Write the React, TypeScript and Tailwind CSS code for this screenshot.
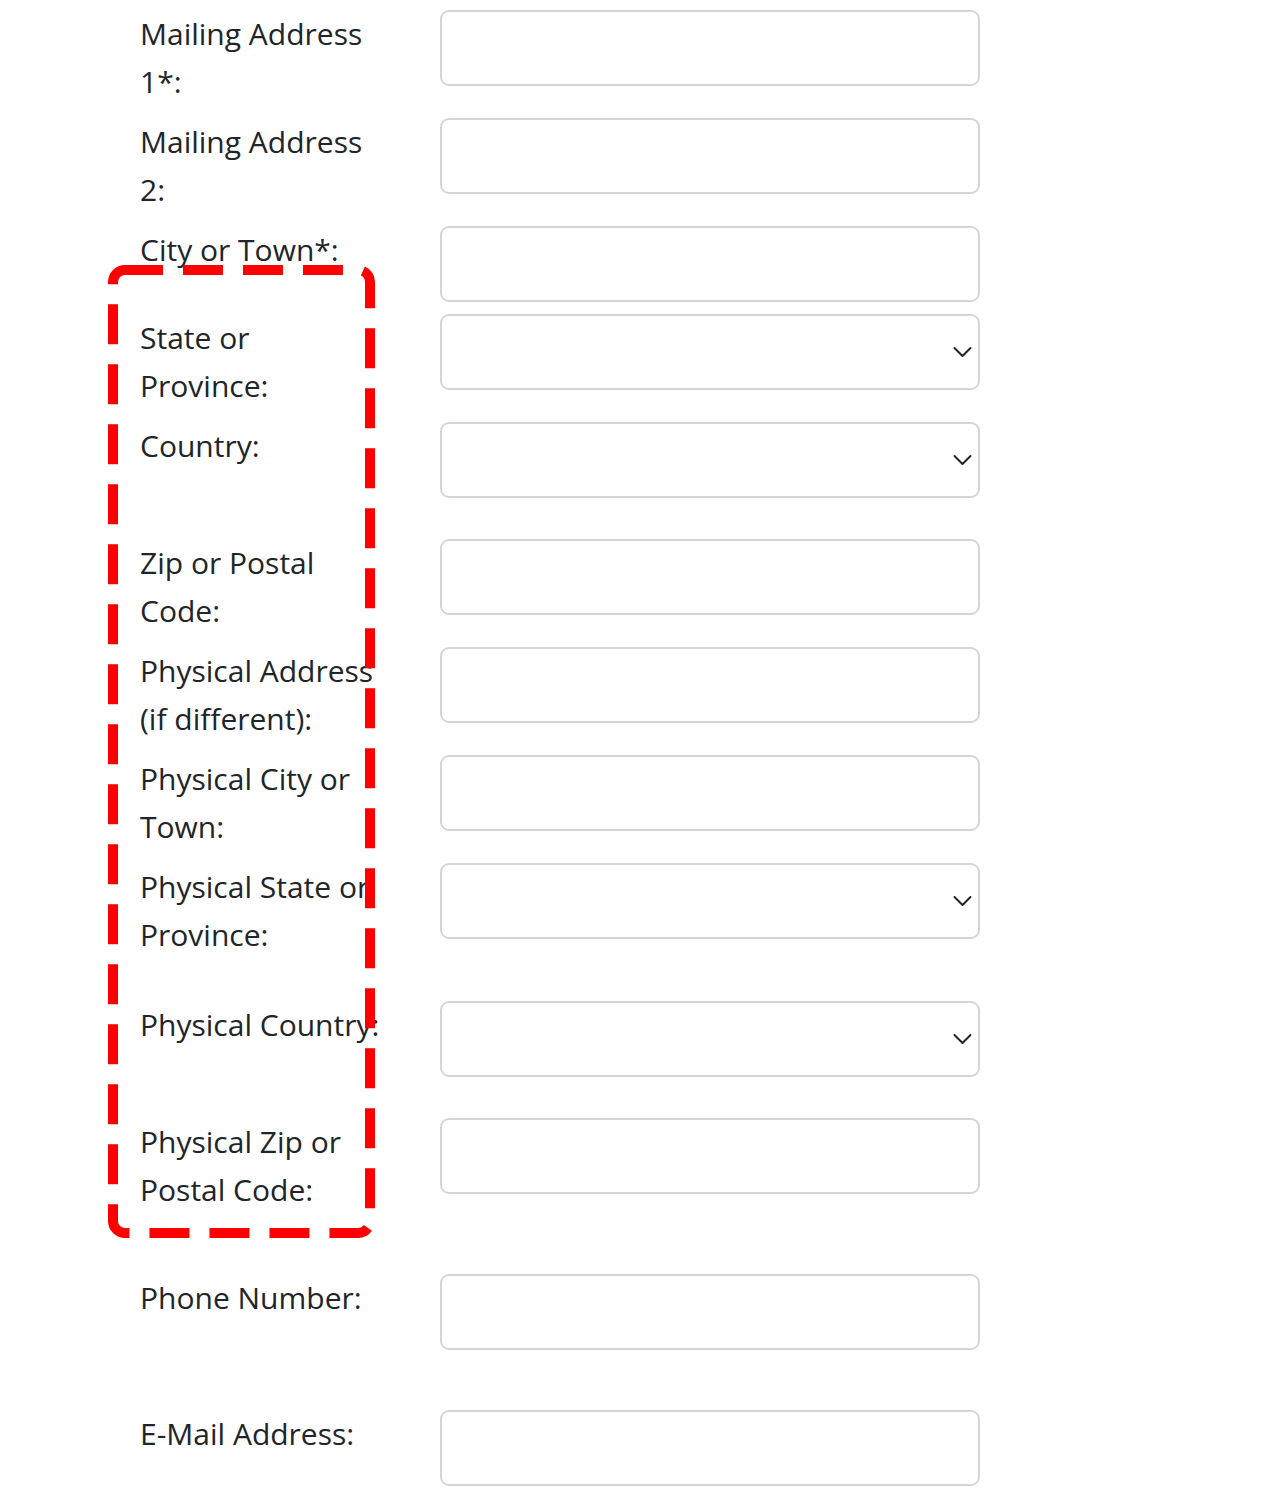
import React from "react";

type Row = { lines: string[]; select?: boolean; h: string };

const rows: Row[] = [
  { lines: ["Mailing Address", "1*:"], h: "h-[108px]" },
  { lines: ["Mailing Address", "2:"], h: "h-[108px]" },
  { lines: ["City or Town*:"], h: "h-[88px]" },
  { lines: ["State or", "Province:"], select: true, h: "h-[108px]" },
  { lines: ["Country:"], select: true, h: "h-[117px]" },
  { lines: ["Zip or Postal", "Code:"], h: "h-[108px]" },
  { lines: ["Physical Address", "(if different):"], h: "h-[108px]" },
  { lines: ["Physical City or", "Town:"], h: "h-[108px]" },
  { lines: ["Physical State or", "Province:"], select: true, h: "h-[138px]" },
  { lines: ["Physical Country:"], select: true, h: "h-[117px]" },
  { lines: ["Physical Zip or", "Postal Code:"], h: "h-[156px]" },
  { lines: ["Phone Number:"], h: "h-[136px]" },
  { lines: ["E-Mail Address:"], h: "h-[82px]" },
];

function Chevron() {
  return (
    <svg width="19" height="11" viewBox="0 0 19 11" fill="none" className="absolute right-[6px] top-1/2 -translate-y-1/2">
      <path d="M1.5 1.5 L9.5 9.5 L17.5 1.5" stroke="#212529" strokeWidth="2" strokeLinecap="round" strokeLinejoin="round" />
    </svg>
  );
}

export default function App() {
  return (
    <div className="relative w-[1266px] h-[1492px] bg-white overflow-hidden" style={{ fontFamily: '"Open Sans", "Noto Sans", sans-serif' }}>
      <div className="pt-[10px] pl-[140px] flex flex-col">
        {rows.map((r, i) => (
          <div key={i} className={`flex ${r.h}`}>
            <div className="w-[300px] text-[30px] leading-[48px] text-[#212529] whitespace-nowrap">
              {r.lines.map((l, j) => (
                <div key={j}>{l}</div>
              ))}
            </div>
            <div className="relative w-[540px] h-[76px] rounded-[9px] border-2 border-[#d2d6db] bg-white">
              {r.select && <Chevron />}
            </div>
          </div>
        ))}
      </div>
      <svg className="absolute left-0 top-0 pointer-events-none" width="1266" height="1492">
        <rect x="113" y="270" width="257" height="963" rx="12" ry="12" fill="none" stroke="#ff0000" strokeWidth="10" strokeDasharray="40 20" strokeDashoffset="2" />
      </svg>
    </div>
  );
}
